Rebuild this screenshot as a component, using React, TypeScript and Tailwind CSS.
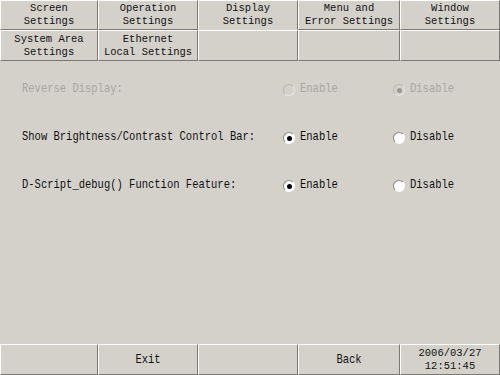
import React from "react";

const font = { fontFamily: '"Liberation Mono", "DejaVu Sans Mono", monospace' };

function Cell({ children, className = "" }: { children?: React.ReactNode; className?: string }) {
  return (
    <div
      className={
        "flex flex-col items-center justify-center border-t border-l border-t-white border-l-white border-r border-b border-r-[#7a7873] border-b-[#7a7873] text-[10.5px] leading-[13px] text-[#111] " +
        className
      }
    >
      {children}
    </div>
  );
}

function T({ children }: { children: React.ReactNode }) {
  return <span className="inline-block scale-y-[1.12]">{children}</span>;
}

function Radio({ checked, disabled }: { checked?: boolean; disabled?: boolean }) {
  return (
    <span
      className={
        "relative inline-flex h-[12px] w-[12px] items-center justify-center rounded-full border " +
        (disabled
          ? "border-[#b9b6b0] border-b-[#e6e4e0] border-r-[#e6e4e0] bg-[#d4d1cb]"
          : "border-[#8a8782] border-b-white border-r-white bg-white")
      }
    >
      {checked && (
        <span className={"h-[5px] w-[5px] rounded-full " + (disabled ? "bg-[#9a9893]" : "bg-black")} />
      )}
    </span>
  );
}

function Row({ label, disabled, enable }: { label: string; disabled?: boolean; enable: boolean }) {
  const tc = disabled ? "text-[#a9a7a2]" : "text-[#111]";
  return (
    <div className={"flex h-[48px] items-center text-[10.5px] " + tc}>
      <div className="w-[283px] pl-[22px]">
        <span className="inline-block scale-y-[1.2]">{label}</span>
      </div>
      <div className="flex w-[110px] items-center gap-[5px]">
        <Radio checked={enable} disabled={disabled} />
        <span className="inline-block scale-y-[1.2]">Enable</span>
      </div>
      <div className="flex items-center gap-[5px]">
        <Radio checked={!enable} disabled={disabled} />
        <span className="inline-block scale-y-[1.2]">Disable</span>
      </div>
    </div>
  );
}

export default function App() {
  return (
    <div className="flex h-[375px] w-[500px] flex-col overflow-hidden bg-[#d4d1cb]" style={font}>
      <div className="grid h-[30px] grid-cols-[98px_100px_100px_102px_100px]">
        <Cell>
          <T>Screen</T>
          <T>Settings</T>
        </Cell>
        <Cell>
          <T>Operation</T>
          <T>Settings</T>
        </Cell>
        <Cell className="border-b-[#d4d1cb]">
          <T>Display</T>
          <T>Settings</T>
        </Cell>
        <Cell>
          <T>Menu and</T>
          <T>Error Settings</T>
        </Cell>
        <Cell>
          <T>Window</T>
          <T>Settings</T>
        </Cell>
      </div>
      <div className="grid h-[31px] grid-cols-[98px_100px_100px_102px_100px]">
        <Cell>
          <T>System Area</T>
          <T>Settings</T>
        </Cell>
        <Cell>
          <T>Ethernet</T>
          <T>Local Settings</T>
        </Cell>
        <Cell />
        <Cell />
        <Cell />
      </div>
      <div className="flex flex-1 flex-col pt-[5px]">
        <Row label="Reverse Display:" disabled enable={false} />
        <Row label="Show Brightness/Contrast Control Bar:" enable />
        <Row label="D-Script_debug() Function Feature:" enable />
      </div>
      <div className="grid h-[31px] grid-cols-[98px_100px_100px_102px_100px]">
        <Cell />
        <Cell>
          <span className="inline-block scale-y-[1.2]">Exit</span>
        </Cell>
        <Cell />
        <Cell>
          <span className="inline-block scale-y-[1.2]">Back</span>
        </Cell>
        <Cell>
          <T>2006/03/27</T>
          <T>12:51:45</T>
        </Cell>
      </div>
    </div>
  );
}
